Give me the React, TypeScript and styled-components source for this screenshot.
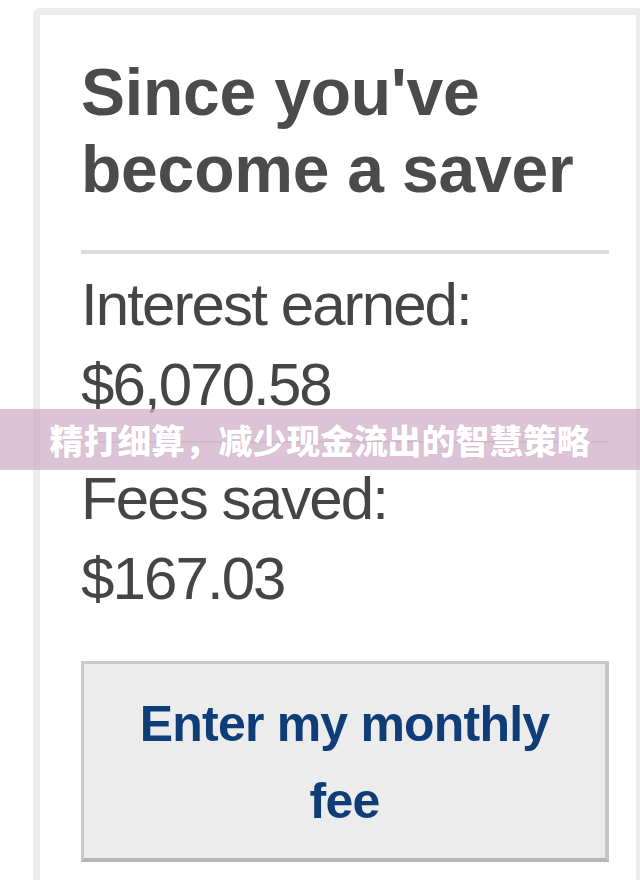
import * as React from 'react';
import styled, { createGlobalStyle } from 'styled-components';

const GlobalStyle = createGlobalStyle`
  html, body {
    margin: 0;
    padding: 0;
    background: #ffffff;
  }
  body {
    font-family: "Liberation Sans", Arial, Helvetica, sans-serif;
  }
`;

const Page = styled.div`
  position: relative;
  width: 640px;
  height: 880px;
  overflow: hidden;
  background: #ffffff;
`;

const Card = styled.section`
  margin: 8px 0 0 33px;
  width: 610px;
  min-height: 1000px;
  border: 7px solid #ececec;
  border-radius: 6px 0 0 0;
  padding: 39px 41px 0 41px;
  box-sizing: border-box;
  background: #ffffff;
`;

const Content = styled.div`
  width: 528px;
`;

const Heading = styled.h1`
  margin: 0;
  font-size: 66px;
  line-height: 77px;
  font-weight: 700;
  letter-spacing: -0.2px;
  color: #4b4b4b;
`;

const Divider = styled.hr<{ $thick?: boolean; $top: number }>`
  margin: ${(p) => p.$top}px 0 0 0;
  border: 0;
  height: ${(p) => (p.$thick ? 4 : 2)}px;
  background: ${(p) => (p.$thick ? '#dcdcdc' : '#d9d9d9')};
`;

const Stat = styled.div<{ $top: number }>`
  margin-top: ${(p) => p.$top}px;
  font-size: 60px;
  line-height: 80px;
  letter-spacing: -1.9px;
  color: #454545;
`;

const StatLine = styled.div`
  white-space: nowrap;
`;

const FeeButton = styled.button`
  display: block;
  width: 528px;
  margin-top: 42px;
  padding: 22px 20px 18px;
  border-style: solid;
  border-width: 3px 4px 4px 3px;
  border-color: #cacaca #c4c4c4 #b6b6b6 #cacaca;
  background: #ececec;
  font-family: "Liberation Sans", Arial, Helvetica, sans-serif;
  font-size: 50px;
  line-height: 77px;
  font-weight: 700;
  letter-spacing: -0.8px;
  color: #0e3d78;
  text-align: center;
  cursor: pointer;
`;

const Banner = styled.div`
  position: absolute;
  left: 0;
  top: 409px;
  width: 100%;
  height: 61px;
  display: flex;
  align-items: center;
  justify-content: center;
  background: rgba(205, 170, 195, 0.7);
  color: #ffffff;
  font-family: "Noto Sans CJK SC", "Noto Sans", sans-serif;
  font-size: 34px;
  font-weight: 900;
  letter-spacing: -0.2px;
  text-shadow: 0 0 1px rgba(120, 90, 110, 0.25);
`;

const App: React.FunctionComponent = () => {
  return (
    <Page>
      <GlobalStyle />
      <Card>
        <Content>
          <Heading>
            Since you've
            <br />
            become a saver
          </Heading>
          <Divider $thick $top={42} />
          <Stat $top={11}>
            <StatLine>Interest earned:</StatLine>
            <StatLine>$6,070.58</StatLine>
          </Stat>
          <Divider $top={16} />
          <Stat $top={16}>
            <StatLine>Fees saved:</StatLine>
            <StatLine>$167.03</StatLine>
          </Stat>
          <FeeButton>Enter my monthly fee</FeeButton>
        </Content>
      </Card>
      <Banner>精打细算，减少现金流出的智慧策略</Banner>
    </Page>
  );
};

export default App;
